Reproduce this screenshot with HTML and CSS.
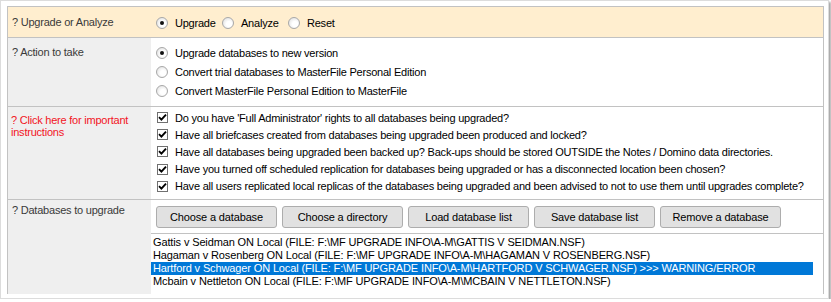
FILE: index.html
```html
<!DOCTYPE html>
<html lang="en">
  <head>
    <meta charset="UTF-8" />
    <link rel="stylesheet" href="styles.css">
  </head>
  <body>
    <div class="frame">
      <div class="panel">
        <div class="row mode">
          <div class="label">? Upgrade or Analyze</div>
          <div class="field inline">
            <span class="option"><span class="radio on"></span>Upgrade</span>
            <span class="option"><span class="radio"></span>Analyze</span>
            <span class="option"><span class="radio"></span>Reset</span>
          </div>
        </div>
        <div class="row action">
          <div class="label">? Action to take</div>
          <div class="field stack">
            <span class="option"><span class="radio on"></span>Upgrade databases to new version</span>
            <span class="option"><span class="radio"></span>Convert trial databases to MasterFile Personal Edition</span>
            <span class="option"><span class="radio"></span>Convert MasterFile Personal Edition to MasterFile</span>
          </div>
        </div>
        <div class="row checks">
          <div class="label warn">? Click here for important instructions</div>
          <div class="field">
            <div class="check-item"><span class="checkbox"><svg viewBox="0 0 9 9"><path d="M1 4.2 L3.4 6.6 L8 1.6" /></svg></span>Do you have 'Full Administrator' rights to all databases being upgraded?</div>
            <div class="check-item"><span class="checkbox"><svg viewBox="0 0 9 9"><path d="M1 4.2 L3.4 6.6 L8 1.6" /></svg></span>Have all briefcases created from databases being upgraded been produced and locked?</div>
            <div class="check-item"><span class="checkbox"><svg viewBox="0 0 9 9"><path d="M1 4.2 L3.4 6.6 L8 1.6" /></svg></span>Have all databases being upgraded been backed up? Back-ups should be stored OUTSIDE the Notes / Domino data directories.</div>
            <div class="check-item"><span class="checkbox"><svg viewBox="0 0 9 9"><path d="M1 4.2 L3.4 6.6 L8 1.6" /></svg></span>Have you turned off scheduled replication for databases being upgraded or has a disconnected location been chosen?</div>
            <div class="check-item"><span class="checkbox"><svg viewBox="0 0 9 9"><path d="M1 4.2 L3.4 6.6 L8 1.6" /></svg></span>Have all users replicated local replicas of the databases being upgraded and been advised to not to use them until upgrades complete?</div>
          </div>
        </div>
        <div class="row databases">
          <div class="label">? Databases to upgrade</div>
          <div class="field">
            <div class="buttons">
              <button class="btn">Choose a database</button>
              <button class="btn">Choose a directory</button>
              <button class="btn">Load database list</button>
              <button class="btn">Save database list</button>
              <button class="btn">Remove a database</button>
            </div>
            <ul class="db-list">
              <li>Gattis v Seidman ON Local (FILE: F:\MF UPGRADE INFO\A-M\GATTIS V SEIDMAN.NSF)</li>
              <li>Hagaman v Rosenberg ON Local (FILE: F:\MF UPGRADE INFO\A-M\HAGAMAN V ROSENBERG.NSF)</li>
              <li class="selected">Hartford v Schwager ON Local (FILE: F:\MF UPGRADE INFO\A-M\HARTFORD V SCHWAGER.NSF) &gt;&gt;&gt; WARNING/ERROR</li>
              <li>Mcbain v Nettleton ON Local (FILE: F:\MF UPGRADE INFO\A-M\MCBAIN V NETTLETON.NSF)</li>
            </ul>
          </div>
        </div>
      </div>
    </div>
  </body>
</html>
```

FILE: styles.css
```css
body {
  margin: 0;
  background-color: #ffffff;
  font-family: "Liberation Sans", Arial, sans-serif;
  font-size: 11px;
  letter-spacing: -0.22px;
  color: #000000;
}

.frame {
  width: 829px;
  height: 299px;
  box-sizing: border-box;
  border: 1px solid #dcdcdc;
  box-shadow: 2px 2px 2px rgba(0, 0, 0, 0.35);
  background-color: #ffffff;
  padding: 5px 0 0 6px;
}

.panel {
  width: 817px;
  box-sizing: border-box;
  border: 1px solid #c2c2c2;
  border-bottom: none;
}

.row {
  display: grid;
  grid-template-columns: 143px 1fr;
  border-bottom: 1px solid #c2c2c2;
}
.row .label {
  background-color: #efefef;
  color: #3a3a3a;
  padding: 0 10px 0 4px;
  line-height: 13px;
}
.row .field {
  background-color: #ffffff;
  padding-left: 5px;
}

/* upgrade / analyze */
.row.mode {
  height: 30px;
  background-color: #ffeecf;
}
.row.mode .label,
.row.mode .field {
  background-color: #ffeecf;
  display: flex;
  align-items: center;
}
.row.mode .field {
  padding-top: 1px;
}
.row.mode .option {
  width: 66px;
}

.option {
  display: flex;
  align-items: center;
  height: 19px;
  white-space: nowrap;
}
.radio {
  width: 10px;
  height: 10px;
  border: 1px solid #a8a8a8;
  border-radius: 50%;
  background: radial-gradient(circle at 60% 60%, #ffffff 30%, #d9d9d9 100%);
  margin-right: 7px;
  display: flex;
  align-items: center;
  justify-content: center;
}
.radio.on::after {
  content: "";
  width: 4px;
  height: 4px;
  border-radius: 50%;
  background-color: #111111;
}

/* action */
.row.action {
  height: 68px;
}
.row.action .label {
  padding-top: 8px;
}
.row.action .field {
  padding-top: 5px;
  display: flex;
  flex-direction: column;
}

/* checklist */
.row.checks {
  height: 92px;
}
.row .label.warn {
  color: #f2141e;
  padding-top: 7px;
  padding-left: 3px;
  line-height: 12px;
}
.row.checks .field {
  padding-top: 2px;
}
.check-item {
  display: flex;
  align-items: center;
  height: 17.2px;
  white-space: nowrap;
}
.checkbox {
  width: 11px;
  height: 11px;
  box-sizing: border-box;
  border: 1px solid #707070;
  background-color: #ffffff;
  margin: 0 7px 0 1px;
  display: flex;
}
.checkbox svg {
  width: 9px;
  height: 9px;
  fill: none;
  stroke: #000000;
  stroke-width: 1.9;
}

/* databases */
.row.databases {
  height: 94px;
  border-bottom: none;
}
.row.databases .label {
  padding-top: 4px;
}
.row.databases .field {
  padding: 6px 0 0 0;
}
.buttons {
  display: flex;
  gap: 5px;
  padding-left: 5px;
  margin-bottom: 5px;
}
.btn {
  width: 121px;
  height: 22px;
  border: 1px solid #adadad;
  border-radius: 3px;
  background-color: #e1e1e1;
  font-family: "Liberation Sans", Arial, sans-serif;
  font-size: 11px;
  letter-spacing: -0.15px;
  color: #000000;
  padding: 0;
}
.db-list {
  list-style: none;
  margin: 0;
  padding: 2px 0 0 0;
  border-top: 1px solid #c2c2c2;
  letter-spacing: -0.13px;
}
.db-list li {
  width: 662px;
  box-sizing: border-box;
  padding-left: 2px;
  height: 13px;
  line-height: 13px;
  white-space: nowrap;
}
.db-list li.selected {
  background-color: #0078d7;
  color: #ffffff;
}
```
